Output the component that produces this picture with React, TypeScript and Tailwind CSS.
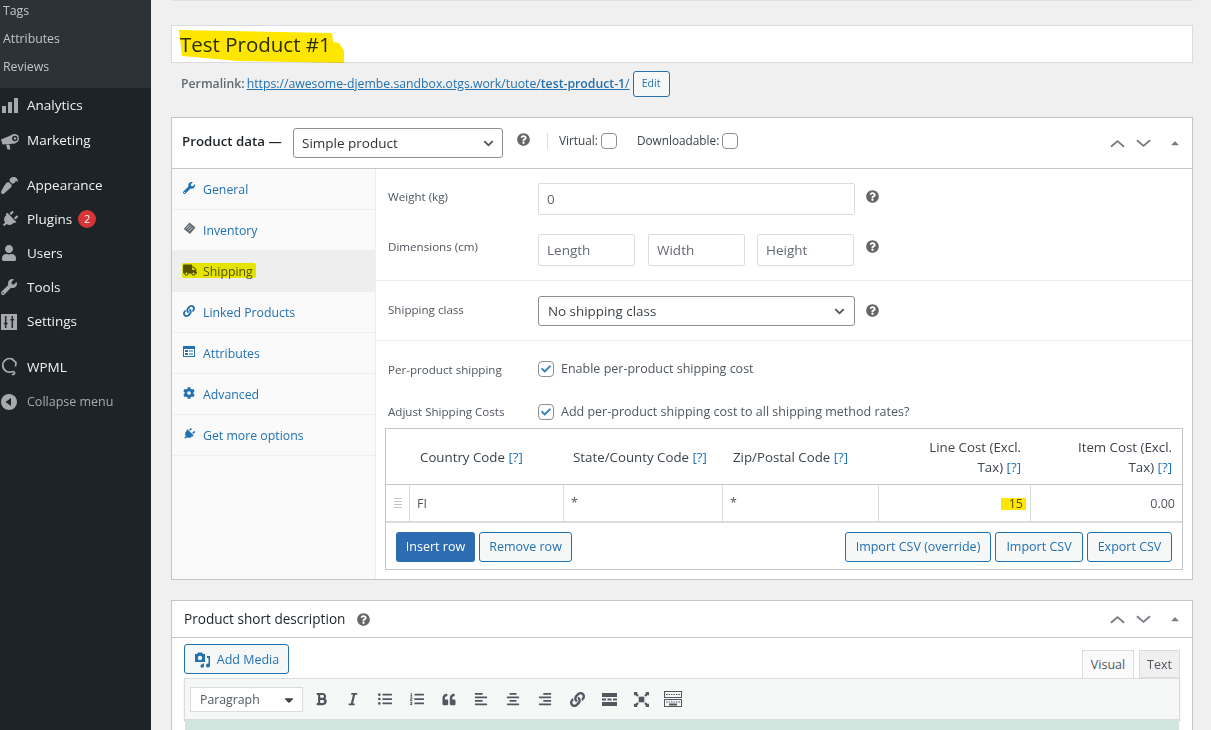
import type { ReactNode } from 'react'
import {
  FaBold, FaCheck, FaChevronDown, FaCog, FaItalic, FaLink, FaListOl, FaListUl,
  FaPaintBrush, FaPlug, FaQuestionCircle, FaQuoteLeft, FaTruck, FaUser, FaWrench,
  FaAlignCenter, FaAlignLeft, FaAlignRight, FaCaretDown, FaCaretUp,
} from 'react-icons/fa'

const BarsIcon = () => (
  <svg viewBox="0 0 17 17" className="w-[17px] h-[17px] fill-[#a7aaad]">
    <rect x="1" y="9" width="4" height="7" />
    <rect x="7" y="5" width="4" height="11" />
    <rect x="13" y="1" width="4" height="15" />
  </svg>
)

const MegaphoneIcon = () => (
  <svg viewBox="0 0 18 18" className="w-[18px] h-[18px]">
    <path d="M0 7.500 12 2.500 14.500 11.500 1.500 12.500z" fill="#a7aaad" />
    <path d="M5 12.500h3.500l.8 5H6.500z" fill="#a7aaad" />
    <circle cx="13.500" cy="6.500" r="4.500" fill="#a7aaad" />
    <circle cx="13.800" cy="6.500" r="2.700" fill="#1d2327" />
    <circle cx="14" cy="6.500" r="1.200" fill="#a7aaad" />
  </svg>
)

const SlidersIcon = () => (
  <svg viewBox="0 0 17 17" className="w-[16px] h-[16px]">
    <rect width="17" height="17" fill="#a7aaad" />
    <path d="M5 2v13M12 2v13M3 10h4M10 6h4" stroke="#2a2438" strokeWidth="1.6" />
  </svg>
)

const WpmlIcon = () => (
  <svg viewBox="0 0 17 20" fill="none" className="w-[17px] h-[20px]">
    <path d="M11 2a6.800 6.800 0 1 0 .5 12.500c1.700.2 2.300 1 2 2-.3 1-1.700 1.200-2.600.7" stroke="#a7aaad" strokeWidth="1.700" />
    <path d="M10.500 1.500 15 5.500l-.5 4" stroke="#a7aaad" strokeWidth="1.700" />
  </svg>
)

const CollapseIcon = () => (
  <svg viewBox="0 0 16 16" className="w-[16px] h-[16px]">
    <circle cx="8" cy="8" r="8" fill="#a7aaad" />
    <path d="M10 4v8L4.500 8z" fill="#1d2327" />
  </svg>
)

const TagGridIcon = () => (
  <svg viewBox="0 0 14 14" className="w-[13px] h-[13px]">
    <path d="M7 .5 13.500 6 7.500 13 .8 7.500z" fill="#646970" />
    <path d="M3.500 7 7.500 3M5 8.500l4-4M6.500 10l4-4" stroke="#fff" strokeWidth=".7" />
  </svg>
)

const AttributesIcon = () => (
  <svg viewBox="0 0 12 11" className="w-[12px] h-[11px]">
    <rect width="12" height="11" fill="#2271b1" />
    <rect x="1" y="3" width="10" height="7" fill="#fff" />
    <rect x="2" y="4" width="3" height="2" fill="#2271b1" />
    <rect x="6" y="4.500" width="4" height="1" fill="#2271b1" />
    <rect x="2" y="7" width="3" height="2" fill="#2271b1" />
    <rect x="6" y="7.500" width="4" height="1" fill="#2271b1" />
  </svg>
)

const MediaIcon = () => (
  <svg viewBox="0 0 17 16" className="w-[17px] h-[16px] fill-[#2271b1]">
    <path d="M1 2h2l1-1.500h4L9 2h2v8H1z" />
    <circle cx="6" cy="6" r="2.200" fill="#f6f7f7" />
    <path d="M13 4h3v9.500a2 2 0 1 1-1.500-1.900V6H13zM6.500 11.500h3.500V14a1.800 1.800 0 1 1-1.300-1.700v-.8H6.500z" />
  </svg>
)

const ReadMoreIcon = () => (
  <svg viewBox="0 0 15 13" className="w-[15px] h-[13px] fill-[#50575e]">
    <rect width="15" height="4" />
    <rect y="5.500" width="4" height="2" />
    <rect x="5.500" y="5.500" width="4" height="2" />
    <rect x="11" y="5.500" width="4" height="2" />
    <rect y="9" width="15" height="4" />
  </svg>
)

const FullscreenIcon = () => (
  <svg viewBox="0 0 16 16" className="w-[15px] h-[15px] fill-[#50575e]">
    <rect x="5" y="5" width="6" height="6" />
    <path d="M0 0h4L3 1l2 2.500L3.500 5 1 3 0 4zM16 0v4l-1-1-2.500 2L11 3.500 13 1l-1-1zM0 16v-4l1 1 2.500-2L5 12.500 3 15l1 1zM16 16h-4l1-1-2-2.500 1.500-1.500L15 13l1-1z" />
  </svg>
)

const KitchenSinkIcon = () => (
  <svg viewBox="0 0 18 16" fill="none" className="w-[18px] h-[16px]">
    <rect x=".5" y=".5" width="17" height="6" stroke="#50575e" />
    <path d="M2 3.500h14" stroke="#50575e" strokeDasharray="1.500 1" />
    <rect x=".5" y="8.500" width="17" height="7" stroke="#50575e" />
    <path d="M2 11h14" stroke="#50575e" strokeDasharray="1.500 1" />
    <path d="M5 13.500h8" stroke="#50575e" strokeWidth="2" />
  </svg>
)

const Help = () => <FaQuestionCircle className="text-[#666] w-[13px] h-[13px]" />

const Check = ({ checked = false }: { checked?: boolean }) => (
  <span className="w-[16px] h-[16px] shrink-0 flex items-center justify-center bg-white border border-[#8c8f94] rounded-[4px]">
    {checked && <FaCheck className="text-[#3582c4] w-[10px] h-[10px]" />}
  </span>
)

const BoxControls = () => (
  <div className="ml-auto flex items-center text-[#787c82]">
    <svg viewBox="0 0 16 9" fill="none" className="w-[15px] h-[9px]"><path d="M1 8l7-6 7 6" stroke="currentColor" strokeWidth="2" /></svg>
    <svg viewBox="0 0 16 9" fill="none" className="w-[15px] h-[9px] ml-[11px]"><path d="M1 1l7 6 7-6" stroke="currentColor" strokeWidth="2" /></svg>
    <FaCaretUp className="w-[12px] h-[12px] ml-[18px] mr-[11px]" />
  </div>
)

const SideItem = ({ icon, label, cls, badge }: { icon: ReactNode; label: string; cls: string; badge?: string }) => (
  <div className={'flex items-center text-[13.500px] text-[#f0f0f1] ' + cls}>
    <span className="w-[27px] pl-px flex items-center shrink-0">{icon}</span>
    <span>{label}</span>
    {badge && (
      <span className="ml-[6px] w-[18px] h-[18px] rounded-full bg-[#d63638] text-white text-[11px] flex items-center justify-center">{badge}</span>
    )}
  </div>
)

const Sidebar = () => (
  <aside className="w-[151px] shrink-0 bg-[#1d2327] h-[730px] overflow-hidden">
    <div className="bg-[#2c3338] h-[88px] overflow-hidden pl-[3px] text-[12.300px] text-[#c3c4c7]">
      <div className="-mt-[3px]">
        <div className="h-[28px] flex items-center">Tags</div>
        <div className="h-[28px] flex items-center">Attributes</div>
        <div className="h-[28px] flex items-center">Reviews</div>
      </div>
    </div>
    <SideItem cls="h-[35px]" icon={<BarsIcon />} label="Analytics" />
    <SideItem cls="h-[35px]" icon={<MegaphoneIcon />} label="Marketing" />
    <SideItem cls="h-[34px] mt-[10px]" icon={<FaPaintBrush className="w-[17px] h-[17px] text-[#a7aaad] rotate-180" />} label="Appearance" />
    <SideItem cls="h-[34px]" icon={<FaPlug className="w-[17px] h-[17px] text-[#a7aaad] rotate-45" />} label="Plugins" badge="2" />
    <SideItem cls="h-[34px]" icon={<FaUser className="w-[16px] h-[16px] text-[#a7aaad]" />} label="Users" />
    <SideItem cls="h-[34px]" icon={<FaWrench className="w-[16px] h-[16px] text-[#a7aaad]" />} label="Tools" />
    <SideItem cls="h-[35px]" icon={<SlidersIcon />} label="Settings" />
    <SideItem cls="h-[34px] mt-[11px]" icon={<WpmlIcon />} label="WPML" />
    <div className="h-[34px] pt-[2px] flex items-center text-[12.500px] text-[#a7aaad]">
      <span className="w-[27px] pl-px flex items-center"><CollapseIcon /></span>
      Collapse menu
    </div>
  </aside>
)

const tabs: { label: string; icon: ReactNode; active?: boolean }[] = [
  { label: 'General', icon: <FaWrench className="w-[12px] h-[12px]" /> },
  { label: 'Inventory', icon: <TagGridIcon /> },
  { label: 'Shipping', icon: <FaTruck className="w-[14px] h-[12px]" />, active: true },
  { label: 'Linked Products', icon: <FaLink className="w-[12px] h-[12px]" /> },
  { label: 'Attributes', icon: <AttributesIcon /> },
  { label: 'Advanced', icon: <FaCog className="w-[12px] h-[12px]" /> },
  { label: 'Get more options', icon: <FaPlug className="w-[12px] h-[12px] rotate-45" /> },
]

const ProductTabs = () => (
  <ul className="w-[204px] shrink-0 bg-[#fafafa] border-r border-[#eee] text-[12.300px]">
    {tabs.map((t) => (
      <li
        key={t.label}
        className={
          'h-[41px] flex items-center pl-[11px] pt-[2px] border-b relative ' +
          (t.active ? 'bg-[#eee] text-[#555] border-[#eee]' : 'text-[#2271b1] border-[#eee]')
        }
      >
        <span className="w-[20px] -mt-[5px] flex items-center">{t.icon}</span>
        {t.label}
        {t.active && (
          <span className="absolute left-[10px] top-[12px] w-[74px] h-[15px] bg-[#f5f500] mix-blend-multiply rounded-[2px]" />
        )}
      </li>
    ))}
  </ul>
)

const TextField = ({ w, placeholder, value }: { w: string; placeholder?: string; value?: string }) => (
  <input
    readOnly
    placeholder={placeholder}
    value={value ?? ''}
    className={w + ' h-[32px] px-[8px] bg-white border border-[#dcdcde] rounded-[2px] text-[13.500px] text-[#646970] placeholder:text-[#646970] outline-none'}
  />
)

const CostTable = () => (
  <div className="mx-[9px] mt-[8px] border border-[#c3c4c7] text-[12.500px] text-[#3c434a]">
    <div className="grid grid-cols-[23px_154px_159px_156px_152px_1fr] h-[56px] items-center border-b border-[#c3c4c7] text-[13.300px]">
      <div />
      <div className="pl-[11px] pt-[2px]">Country Code <a className="text-[#2271b1]">[?]</a></div>
      <div className="pl-[10px] pt-[2px]">State/County Code <a className="text-[#2271b1]">[?]</a></div>
      <div className="pl-[11px] pt-[2px]">Zip/Postal Code <a className="text-[#2271b1]">[?]</a></div>
      <div className="pr-[9px] text-right leading-[20px]">
        <div>Line Cost (Excl.</div>
        <div>Tax) <a className="text-[#2271b1]">[?]</a></div>
      </div>
      <div className="pr-[10px] text-right leading-[20px]">
        <div>Item Cost (Excl.</div>
        <div>Tax) <a className="text-[#2271b1]">[?]</a></div>
      </div>
    </div>
    <div className="grid grid-cols-[23px_154px_159px_156px_152px_1fr] h-[38px] border-b-2 border-[#dcdcde] text-[#50575e]">
      <div className="flex flex-col items-center justify-center gap-[2px]">
        <span className="w-[8px] h-px bg-[#c3c4c7]" />
        <span className="w-[8px] h-px bg-[#c3c4c7]" />
        <span className="w-[8px] h-px bg-[#c3c4c7]" />
        <span className="w-[8px] h-px bg-[#c3c4c7]" />
      </div>
      <div className="border-l border-[#dcdcde] pl-[7px] pt-[2px] flex items-center">FI</div>
      <div className="border-l border-[#dcdcde] pl-[7px] flex items-center">*</div>
      <div className="border-l border-[#dcdcde] pl-[7px] flex items-center">*</div>
      <div className="border-l border-[#dcdcde] pr-[7px] pt-[2px] flex items-center justify-end relative">
        15
        <span className="absolute right-[4px] top-[13px] w-[25px] h-[12px] bg-[#ffe600] mix-blend-multiply" />
      </div>
      <div className="border-l border-[#dcdcde] pr-[7px] pt-[2px] flex items-center justify-end">0.00</div>
    </div>
    <div className="h-[46px] pt-[2px] flex items-center pl-[10px] pr-[10px] text-[12.500px]">
      <button className="h-[30px] w-[79px] bg-[#2d6cb0] text-white rounded-[3px]">Insert row</button>
      <button className="h-[30px] w-[93px] ml-[4px] bg-[#f6f7f7] text-[#2271b1] border border-[#2271b1] rounded-[3px]">Remove row</button>
      <button className="h-[30px] w-[146px] ml-auto bg-[#f6f7f7] text-[#2271b1] border border-[#2271b1] rounded-[3px]">Import CSV (override)</button>
      <button className="h-[30px] w-[88px] ml-[4px] bg-[#f6f7f7] text-[#2271b1] border border-[#2271b1] rounded-[3px]">Import CSV</button>
      <button className="h-[30px] w-[85px] ml-[4px] bg-[#f6f7f7] text-[#2271b1] border border-[#2271b1] rounded-[3px]">Export CSV</button>
    </div>
  </div>
)

const ShippingPanel = () => (
  <div className="flex-1 min-w-0 text-[11.600px] text-[#50575e]">
    <div className="h-[112px] border-b border-[#eee] pt-[14px] pl-[12px]">
      <div className="flex items-center h-[32px]">
        <span className="w-[150px] -mt-[4px]">Weight (kg)</span>
        <TextField w="w-[317px]" value="0" />
        <span className="ml-[11px] -mt-[6px]"><Help /></span>
      </div>
      <div className="flex items-center h-[32px] mt-[19px]">
        <span className="w-[150px] -mt-[6px]">Dimensions (cm)</span>
        <TextField w="w-[97px]" placeholder="Length" />
        <span className="w-[13px]" />
        <TextField w="w-[97px]" placeholder="Width" />
        <span className="w-[12px]" />
        <TextField w="w-[97px]" placeholder="Height" />
        <span className="ml-[12px] -mt-[8px]"><Help /></span>
      </div>
    </div>
    <div className="h-[60px] border-b border-[#eee] pl-[12px] flex items-center">
      <span className="w-[150px] -mt-[1px]">Shipping class</span>
      <div className="w-[317px] h-[30px] px-[9px] pt-[2px] flex items-center justify-between bg-white border border-[#8c8f94] rounded-[3px] text-[13.400px] text-[#3c434a]">
        No shipping class
        <FaChevronDown className="w-[11px] h-[11px] text-[#50575e]" />
      </div>
      <span className="ml-[11px]"><Help /></span>
    </div>
    <div className="pl-[12px] pt-[19px]">
      <div className="flex items-center h-[17px]">
        <span className="w-[150px] pt-[2px]">Per-product shipping</span>
        <Check checked />
        <span className="ml-[7px] pt-[2px] text-[12.500px]">Enable per-product shipping cost</span>
      </div>
      <div className="flex items-center h-[17px] mt-[26px]">
        <span className="w-[150px]">Adjust Shipping Costs</span>
        <Check checked />
        <span className="ml-[7px] pt-[2px] text-[12.500px]">Add per-product shipping cost to all shipping method rates?</span>
      </div>
    </div>
    <CostTable />
  </div>
)

const EditorToolbar = () => {
  const c = 'text-[#50575e]'
  return (
    <div className="h-[42px] bg-[#f6f7f7] border border-[#dcdcde] shadow-[0_1px_1px_rgba(0,0,0,0.2)] flex items-center pl-[5px]">
      <div className="w-[113px] h-[25px] pl-[9px] pr-[6px] pt-[2px] bg-white border border-[#dcdcde] flex items-center justify-between text-[12.300px] text-[#50575e]">
        Paragraph
        <FaCaretDown className="w-[14px] h-[14px] text-[#3c434a]" />
      </div>
      <div className="flex items-center ml-[2px] [&>span]:w-[32px] [&>span]:flex [&>span]:justify-center">
        <span><FaBold className={c + ' w-[13px] h-[14px]'} /></span>
        <span><FaItalic className={c + ' w-[12px] h-[14px]'} /></span>
        <span><FaListUl className={c + ' w-[14px] h-[14px]'} /></span>
        <span><FaListOl className={c + ' w-[14px] h-[14px]'} /></span>
        <span><FaQuoteLeft className={c + ' w-[14px] h-[13px]'} /></span>
        <span><FaAlignLeft className={c + ' w-[14px] h-[14px]'} /></span>
        <span><FaAlignCenter className={c + ' w-[14px] h-[14px]'} /></span>
        <span><FaAlignRight className={c + ' w-[14px] h-[14px]'} /></span>
        <span><FaLink className={c + ' w-[15px] h-[15px]'} /></span>
        <span><ReadMoreIcon /></span>
        <span><FullscreenIcon /></span>
        <span><KitchenSinkIcon /></span>
      </div>
    </div>
  )
}

export default function App() {
  return (
    <div className="h-[730px] overflow-hidden flex bg-[#f0f0f1] font-['Open_Sans',sans-serif]">
      <Sidebar />
      <main className="w-[1022px] ml-[20px] shrink-0">
        <div className="h-px bg-[#e2e2e2]" />
        <div className="relative mt-[24px] h-[38px] bg-white border border-[#dcdcde] flex items-center pl-[8px] pt-[1px] text-[20.500px] text-[#2c3338]">
          Test Product #1
          <svg viewBox="0 0 170 36" className="absolute left-[6px] top-[3px] w-[170px] h-[36px] mix-blend-multiply" preserveAspectRatio="none">
            <path d="M1 1 154 4 155 13 161 14 166 22 166 34 60 32 4 27z" fill="#ffe600" />
          </svg>
        </div>
        <div className="h-[26px] mt-[8px] flex items-center pl-[10px] text-[12.250px] text-[#646970]">
          <b className="font-semibold">Permalink:</b>
          <a className="ml-[2px] text-[#2271b1] underline">https://awesome-djembe.sandbox.otgs.work/tuote/<b className="font-semibold">test-product-1</b>/</a>
          <button className="ml-[3px] w-[37px] h-[26px] bg-[#f6f7f7] text-[#2271b1] border border-[#2271b1] rounded-[3px] text-[10.500px]">Edit</button>
        </div>

        <section className="mt-[20px] h-[463px] bg-white border border-[#c3c4c7] flex flex-col">
          <header className="h-[51px] shrink-0 border-b border-[#c3c4c7] flex items-center pl-[10px] text-[#1d2327]">
            <h2 className="w-[111px] -mt-[2px] text-[13.300px] font-semibold">Product data —</h2>
            <div className="w-[210px] h-[30px] px-[8px] flex items-center justify-between border border-[#8c8f94] rounded-[3px] text-[13.500px] font-medium text-[#2c3338]">
              Simple product
              <FaChevronDown className="w-[11px] h-[11px] text-[#50575e]" />
            </div>
            <span className="ml-[14px] -mt-[8px]"><Help /></span>
            <span className="ml-[17px] -mt-[4px] w-px h-[16px] bg-[#dcdcde]" />
            <span className="ml-[11px] -mt-[4px] text-[11.800px] font-medium text-[#3c434a]">Virtual:</span>
            <span className="ml-[3px] -mt-[4px]"><Check /></span>
            <span className="ml-[20px] -mt-[4px] text-[11.800px] font-medium text-[#3c434a]">Downloadable:</span>
            <span className="ml-[3px] -mt-[4px]"><Check /></span>
            <BoxControls />
          </header>
          <div className="flex flex-1 min-h-0">
            <ProductTabs />
            <ShippingPanel />
          </div>
        </section>

        <section className="mt-[20px] bg-white border border-[#c3c4c7]">
          <header className="h-[37px] border-b border-[#c3c4c7] flex items-center pl-[12px] text-[#1d2327]">
            <h2 className="text-[13.600px] font-medium">Product short description</h2>
            <span className="ml-[12px]"><Help /></span>
            <BoxControls />
          </header>
          <div className="px-[12px] pt-[6px]">
            <div className="flex items-end h-[34px]">
              <button className="h-[30px] w-[105px] mb-[4px] pt-[2px] flex items-center justify-center gap-[6px] bg-[#f6f7f7] text-[#2271b1] border border-[#2271b1] rounded-[3px] text-[12.500px]">
                <MediaIcon />
                Add Media
              </button>
              <div className="ml-auto flex text-[12.500px] text-[#50575e]">
                <span className="w-[52px] h-[28px] -mb-px pt-[2px] relative flex items-center justify-center bg-[#fafafa] border border-[#dcdcde] border-b-0">Visual</span>
                <span className="w-[41px] h-[28px] ml-[5px] pt-[2px] flex items-center justify-center bg-[#f0f0f1] border border-[#dcdcde]">Text</span>
              </div>
            </div>
            <EditorToolbar />
            <div className="h-[20px] mx-px bg-[#d2e4de]" />
          </div>
        </section>
      </main>
    </div>
  )
}
